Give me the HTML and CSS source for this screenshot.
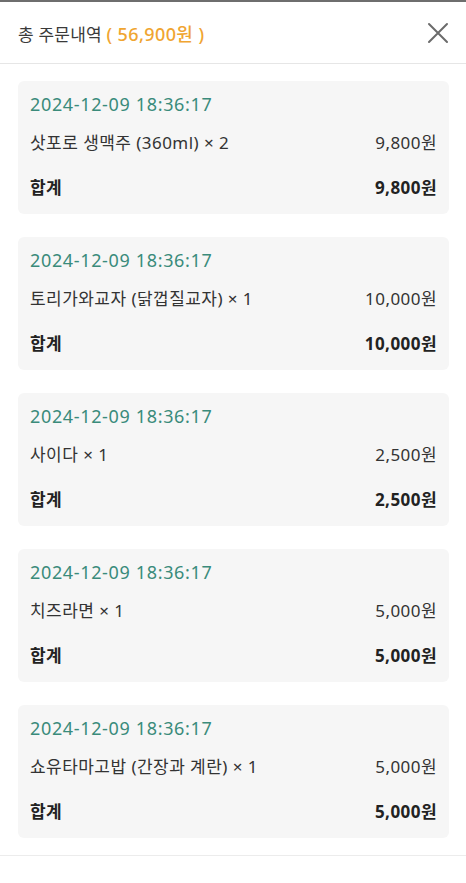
FILE: index.html
```html
<!DOCTYPE html>
<html lang="ko">
<head>
<meta charset="utf-8">
<link rel="stylesheet" href="styles.css">
</head>
<body>
<div class="sheet">
  <header class="header">
    <h1 class="title">총 주문내역 <span class="sum">( 56,900원 )</span></h1>
    <button class="close" aria-label="닫기">
      <svg width="22" height="22" viewBox="0 0 22 22"><path d="M2 2 L20 20 M20 2 L2 20" stroke="#6b6b6b" stroke-width="2" stroke-linecap="round" fill="none"/></svg>
    </button>
  </header>
  <main class="list">
    <section class="card">
      <div class="date">2024-12-09 18:36:17</div>
      <div class="row"><span>삿포로 생맥주 (360ml) × 2</span><span>9,800원</span></div>
      <div class="row total"><span>합계</span><span>9,800원</span></div>
    </section>
    <section class="card">
      <div class="date">2024-12-09 18:36:17</div>
      <div class="row"><span>토리가와교자 (닭껍질교자) × 1</span><span>10,000원</span></div>
      <div class="row total"><span>합계</span><span>10,000원</span></div>
    </section>
    <section class="card">
      <div class="date">2024-12-09 18:36:17</div>
      <div class="row"><span>사이다 × 1</span><span>2,500원</span></div>
      <div class="row total"><span>합계</span><span>2,500원</span></div>
    </section>
    <section class="card">
      <div class="date">2024-12-09 18:36:17</div>
      <div class="row"><span>치즈라면 × 1</span><span>5,000원</span></div>
      <div class="row total"><span>합계</span><span>5,000원</span></div>
    </section>
    <section class="card">
      <div class="date">2024-12-09 18:36:17</div>
      <div class="row"><span>쇼유타마고밥 (간장과 계란) × 1</span><span>5,000원</span></div>
      <div class="row total"><span>합계</span><span>5,000원</span></div>
    </section>
  </main>
</div>
</body>
</html>
```
FILE: styles.css
```css
html, body {
  margin: 0;
  padding: 0;
  background: #ffffff;
}
body {
  font-family: "Noto Sans", "Noto Sans CJK KR", sans-serif;
  color: #222222;
}
.sheet {
  border-top: 2px solid #6e6e6e;
  min-height: 881px;
}
.header {
  height: 61px;
  display: flex;
  align-items: center;
  justify-content: space-between;
  padding: 0 17px 0 18px;
  border-bottom: 1px solid #e6e6e6;
}
.title {
  margin: 0;
  font-size: 17px;
  font-weight: 400;
  color: #3a3a3a;
  letter-spacing: 0.2px;
}
.sum {
  color: #f0a531;
  font-weight: 500;
  font-size: 18px;
  letter-spacing: 0.4px;
}
.close {
  border: 0;
  background: none;
  padding: 0;
  width: 22px;
  height: 22px;
  display: flex;
}
.list {
  padding: 17px 17px 17px 18px;
  display: flex;
  flex-direction: column;
  gap: 23px;
  border-bottom: 1px solid #ececec;
}
.card {
  background: #f6f6f6;
  border-radius: 6px;
  height: 133px;
  box-sizing: border-box;
  padding: 10px 12px 0 12px;
  display: flex;
  flex-direction: column;
}
.date {
  color: #3a8b7b;
  font-size: 18px;
  height: 26px;
  line-height: 26px;
  letter-spacing: 0.65px;
}
.row {
  display: flex;
  justify-content: space-between;
  font-size: 17px;
  color: #333333;
  margin-top: 13px;
  height: 26px;
  line-height: 26px;
  letter-spacing: 0.45px;
}
.row.total {
  margin-top: 19px;
  font-weight: 700;
  color: #222222;
}
```
